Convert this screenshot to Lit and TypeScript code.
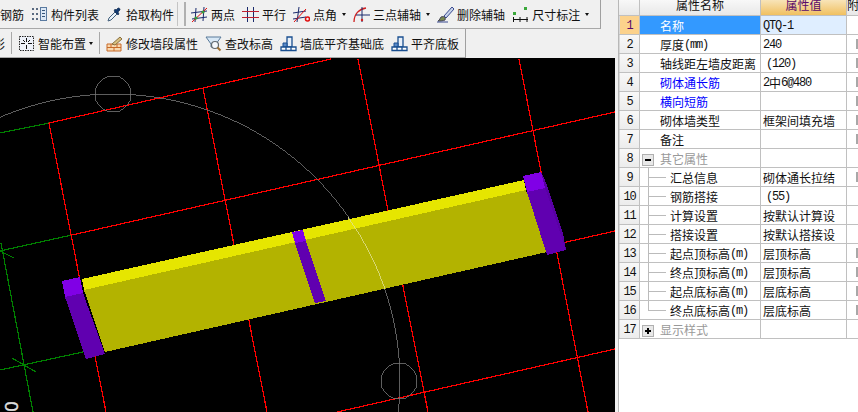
import { LitElement, css, html, svg } from "lit";
import { customElement } from "lit/decorators.js";

const NAVY = "#1a2a6c";
const RED = "#e01010";

// toolbar icons, all on a 17x17 box
const icons: Record<string, unknown> = {
  list: svg`<g fill="#5a6a80"><rect x="1" y="2" width="2" height="2"/><rect x="5" y="2" width="2" height="2"/><rect x="1" y="7" width="2" height="2"/><rect x="5" y="7" width="2" height="2"/><rect x="1" y="12" width="2" height="2"/><rect x="5" y="12" width="2" height="2"/></g>
    <rect x="9.5" y="1.5" width="6" height="13" fill="#dce8f6" stroke="#5a7aa0"/><path d="M11 4.5h3M11 7.5h3M11 10.5h3" stroke="#35557a"/>`,
  dropper: svg`<path d="M2 15l1-3 6-6 2 2-6 6z" fill="#e8f2fa" stroke="#44607c"/><path d="M8 5l4 4 1-1-1-2 2-2a1.6 1.6 0 0 0-2-2l-2 2-1-1z" fill="#123a70" stroke="#0c2448" stroke-width=".6"/>`,
  twoPoint: svg`<path d="M5 2l-1 14M13 1l-1 14M0 7l16-2M1 13l15-2" stroke="${NAVY}" fill="none"/><path d="M1 16L16 2" stroke="${RED}"/><circle cx="5" cy="12" r="1.6" fill="#3a9a3a"/><circle cx="12" cy="6" r="1.6" fill="#3a9a3a"/>`,
  parallel: svg`<path d="M5.500 1v15M11.500 1v15" stroke="${NAVY}"/><path d="M0 5.500h17M0 11.500h17" stroke="#c02030"/>`,
  corner: svg`<path d="M6 1L4 16M0 7l13-2M0 13l13-2" stroke="${NAVY}" fill="none"/><path d="M1 16L13 3" stroke="${RED}"/><circle cx="14.500" cy="13" r="2" fill="none" stroke="${RED}" stroke-width="1.500"/>`,
  arc: svg`<path d="M1 16C1 8 6 3 13 2" fill="none" stroke="#d02020" stroke-width="1.300"/><path d="M9 1v15M3 9h14" stroke="${NAVY}"/><circle cx="9" cy="14" r="1.200" fill="#d02020"/>`,
  erase: svg`<path d="M7 10L15 1l2 2-8 9z" fill="#c8d4ea" stroke="#3a4a90"/><path d="M4 11c3-1 5 0 4 3-2 1-5 1-7 1 2-1 2-3 3-4z" fill="#7a8a50" stroke="#445"/><path d="M0 16h11" stroke="#3a4a90"/>`,
  dimension: svg`<rect x="1" y="6" width="3" height="3" fill="#3aa83a"/><rect x="12" y="1" width="3" height="3" fill="#3aa83a"/><path d="M1.500 11v5M8 11v5M15 11v5M1 13.500h15" stroke="#111"/>`,
  smart: svg`<rect x="1.500" y="1.500" width="14" height="14" fill="#eef2fa" stroke="#222" stroke-dasharray="1.500 1"/><path d="M8.500 3v4M8.500 10v4M3 8.500h4M10 8.500h4M5 5l2 2M12 5l-2 2" stroke="#111"/>`,
  brick: svg`<path d="M1 9h14v7H1z" fill="#f8d8b0" stroke="#c86a28"/><path d="M1 12.500h14M5 9v3.500M11 9v3.500M8 12.500V16" stroke="#c86a28"/><path d="M6 9l8-7 2 2-7 6z" fill="#d8c080" stroke="#8a7040"/>`,
  lens: svg`<path d="M1 2h15l-5 7v3H6V9z" fill="#d8e8f6" stroke="#5a7a9a"/><circle cx="10" cy="10" r="3.500" fill="#f4f8fc" stroke="#606a70" stroke-width="1.200"/><path d="M12.500 12.500l3 3" stroke="#a07030" stroke-width="2"/>`,
  align: svg`<path d="M7 2h5v10H7z" fill="#e8f0fa" stroke="#1a4f90" stroke-width="1.300"/><path d="M3 8h4v4H3z" fill="#5a8ac8" stroke="#1a4f90"/><path d="M1 12h15v3.500H1zM6 12v3.500M11 12v3.500" fill="#fff" stroke="#1a4f90" stroke-width="1.300"/>`,
};

type Tool = { icon: string; label: string; menu?: boolean };

const topLeft: Tool[] = [
  { icon: "list", label: "构件列表" },
  { icon: "dropper", label: "拾取构件" },
];
const topRight: Tool[] = [
  { icon: "twoPoint", label: "两点" },
  { icon: "parallel", label: "平行" },
  { icon: "corner", label: "点角", menu: true },
  { icon: "arc", label: "三点辅轴", menu: true },
  { icon: "erase", label: "删除辅轴" },
  { icon: "dimension", label: "尺寸标注", menu: true },
];
const lowerLeft: Tool[] = [{ icon: "smart", label: "智能布置", menu: true }];
const lowerRight: Tool[] = [
  { icon: "brick", label: "修改墙段属性" },
  { icon: "lens", label: "查改标高" },
  { icon: "align", label: "墙底平齐基础底" },
  { icon: "align", label: "平齐底板" },
];

@customElement("tool-row")
class ToolRow extends LitElement {
  static styles = css`
    :host {
      display: flex;
      align-items: center;
      gap: 7px;
      height: 28px;
      background: #f0f0f0;
      border-bottom: 1px solid #a8a8a8;
      font: 12px "Noto Sans CJK SC", sans-serif;
      color: #111;
      white-space: nowrap;
      overflow: hidden;
      box-sizing: content-box;
    }
    :host([short]) {
      width: 465px;
      border-right: 1px solid #a0a0a0;
    }
    :host([wide]) {
      width: 600px;
      border-right: 1px solid #a0a0a0;
    }
  `;
  render() {
    return html`<slot></slot>`;
  }
}

@customElement("cad-view")
class CadView extends LitElement {
  static styles = css`
    :host {
      display: block;
      height: 354px;
      background: #000;
      overflow: hidden;
    }
    svg {
      display: block;
    }
    .red {
      stroke: #f00;
      stroke-width: 1.2;
      fill: none;
    }
    .green {
      stroke: #008000;
      stroke-width: 1.2;
      fill: none;
    }
    .grey {
      stroke: #757575;
      stroke-width: 0.8;
      fill: none;
    }
    .pale {
      stroke: #e0e090;
      stroke-width: 0.8;
      fill: none;
    }
    .axis {
      font: 18px "Liberation Sans", sans-serif;
      fill: #ddd;
      stroke: #ddd;
      stroke-width: 0.4;
    }
  `;
  render() {
    return html`<svg width="615" height="354" viewBox="0 58 615 354" shape-rendering="crispEdges">
      <path class="green" d="M0 133L49 123M0 251L72 235M0 370L83 352M1 243L33 412M0 251L14 258M12 358L36 372" />
      <path class="red" d="M49 123L331 59M72 235L615 112M83 352L615 231M337 412L615 349" />
      <path class="red" d="M49 123L106 412M203 88L267 412M358 59L428 412M519 59L588 412" />
      <circle class="grey" cx="113" cy="381" r="287" />
      <circle class="grey" cx="113" cy="94" r="18" />
      <circle class="grey" cx="399" cy="381" r="18" />
      <polygon points="82,279 524,180 526,190 84,290" fill="#e6e600" />
      <polygon points="84,290 526,190 547,252 105,352" fill="#b3b300" />
      <polygon points="295,243 306,241 326,301 315,303" fill="#6000b0" />
      <polygon points="292,232 303,230 306,241 295,243" fill="#8000e6" />
      <polygon points="65,297 83,293 105,354 86,359" fill="#6000b0" />
      <polygon points="62,281 80,277 83,293 65,297" fill="#8000e6" />
      <polygon points="527,192 545,188 566,250 547,255" fill="#6000b0" />
      <polygon points="541,172 545,180 563,233 566,250 545,188" fill="#5900a4" />
      <polygon points="523,176 541,172 545,188 527,192" fill="#8000e6" />
      <path class="pale" d="M348 217A287 287 0 0 1 385 289" />
      <text class="axis" shape-rendering="auto" transform="translate(18 411.500) rotate(-90)">0</text>
    </svg>`;
  }
}

type Row = {
  name: string;
  value?: string;
  kind?: "blue" | "group" | "child";
  open?: boolean;
  check?: boolean;
  last?: boolean;
};

const rows: Row[] = [
  { name: "名称", value: "QTQ-1" },
  { name: "厚度(mm)", value: "240", check: true },
  { name: "轴线距左墙皮距离", value: "(120)", check: true },
  { name: "砌体通长筋", value: "2中6@480", kind: "blue", check: true },
  { name: "横向短筋", kind: "blue", check: true },
  { name: "砌体墙类型", value: "框架间填充墙", check: true },
  { name: "备注", check: true },
  { name: "其它属性", kind: "group", open: true },
  { name: "汇总信息", value: "砌体通长拉结", kind: "child", check: true },
  { name: "钢筋搭接", value: "(55)", kind: "child" },
  { name: "计算设置", value: "按默认计算设", kind: "child" },
  { name: "搭接设置", value: "按默认搭接设", kind: "child" },
  { name: "起点顶标高(m)", value: "层顶标高", kind: "child", check: true },
  { name: "终点顶标高(m)", value: "层顶标高", kind: "child", check: true },
  { name: "起点底标高(m)", value: "层底标高", kind: "child", check: true },
  { name: "终点底标高(m)", value: "层底标高", kind: "child", check: true, last: true },
  { name: "显示样式", kind: "group" },
];

// ascii runs use the narrow latin face, like the original grid font
const mixed = (text = "") =>
  text.split(/([\x20-\x7e]+)/).map((part) =>
    /[\x20-\x7e]/.test(part) ? html`<span class="latin">${part}</span>` : part
  );

@customElement("prop-grid")
class PropGrid extends LitElement {
  static styles = css`
    :host {
      display: block;
      font: 12px "Noto Sans CJK SC", sans-serif;
      color: #111;
      white-space: nowrap;
    }
    .row {
      display: grid;
      grid-template-columns: 21px 121px 86px 11px;
      height: 19px;
      border-bottom: 1px solid #c0c0c0;
      box-sizing: border-box;
    }
    .row > div {
      display: flex;
      align-items: center;
      position: relative;
      border-right: 1px solid #c0c0c0;
      padding-top: 1px;
      overflow: hidden;
      box-sizing: border-box;
    }
    .head {
      height: 16px;
    }
    .head > div {
      justify-content: center;
      align-items: flex-end;
      padding-top: 0;
      padding-bottom: 2px;
      background: linear-gradient(#f8f8f8, #e8e8e8);
    }
    .head .sel {
      background: linear-gradient(#f8e4b8, #f0c060);
      color: #5a0a6a;
    }
    .head .rest {
      justify-content: flex-start;
      border-right: 0;
    }
    .num {
      justify-content: center;
      background: linear-gradient(#f8f8f8, #ececec);
      border-left: 1px solid #d8d8d8;
    }
    .num.on {
      background: #fcd28c;
      color: #5a0a6a;
    }
    .name {
      padding-left: 20px;
    }
    .name.on {
      background: #3399ff;
      color: #fff;
    }
    .name.blue {
      color: #0000ff;
    }
    .name.group {
      color: #999;
    }
    .name.child {
      padding-left: 30px;
    }
    .value {
      padding-left: 2px;
    }
    .value.on {
      background: #dfeeff;
    }
    .value.paren {
      padding-left: 5px;
    }
    .rest {
      border-right: 0 !important;
    }
    .rest.check::after {
      content: "";
      position: absolute;
      left: 9px;
      top: 4px;
      width: 2px;
      height: 10px;
      background: #a8a8a8;
    }
    .latin {
      font-family: "Liberation Mono", monospace;
      letter-spacing: -1.2px;
    }
    .fold {
      position: absolute;
      left: 2px;
      top: 5px;
      width: 12px;
      height: 12px;
      box-sizing: border-box;
      border: 1px solid #b0b0b0;
      background: #e8e8e8;
    }
    .fold::before,
    .fold.closed::after {
      content: "";
      position: absolute;
      left: 2px;
      top: 4px;
      width: 6px;
      height: 2px;
      background: #000;
    }
    .fold.closed::after {
      left: 4px;
      top: 2px;
      width: 2px;
      height: 6px;
    }
    .tree {
      position: absolute;
      left: 8px;
      top: 0;
      width: 17px;
      height: 100%;
      border-left: 1px solid #bbb;
    }
    .tree::after {
      content: "";
      position: absolute;
      left: 0;
      top: 9px;
      width: 17px;
      border-top: 1px solid #bbb;
    }
    .tree.last {
      height: 10px;
    }
  `;
  render() {
    return html`
      <div class="row head">
        <div></div>
        <div>属性名称</div>
        <div class="sel">属性值</div>
        <div class="rest">附加</div>
      </div>
      ${rows.map((row, i) => {
        const on = i === 0 ? "on" : "";
        return html`<div class="row">
          <div class="num ${on}"><span class="latin">${i + 1}</span></div>
          <div class="name ${on} ${row.kind ?? ""}">
            ${row.kind === "group" ? html`<span class="fold ${row.open ? "" : "closed"}"></span>` : ""}
            ${row.kind === "child" ? html`<span class="tree ${row.last ? "last" : ""}"></span>` : ""}
            ${mixed(row.name)}
          </div>
          <div class="value ${on} ${row.value?.startsWith("(") ? "paren" : ""}">${mixed(row.value)}</div>
          <div class="rest ${row.check ? "check" : ""}"></div>
        </div>`;
      })}
    `;
  }
}

@customElement("app-root")
class AppRoot extends LitElement {
  static styles = css`
    :host {
      display: grid;
      grid-template-columns: 615px 3px 1px 1fr;
      height: 412px;
      width: 858px;
      overflow: hidden;
      background: #fff;
      font: 12px "Noto Sans CJK SC", sans-serif;
    }
    .left {
      display: flex;
      flex-direction: column;
      background: #f0f0f0;
      min-width: 0;
    }
    .strip {
      background: #f0f0f0;
    }
    .rule {
      background: #b8b8b8;
    }
    .tool {
      display: flex;
      align-items: center;
      gap: 3px;
    }
    .tool svg {
      width: 17px;
      height: 17px;
      flex: none;
    }
    .arrow {
      width: 0;
      height: 0;
      border: 2.5px solid transparent;
      border-top: 3px solid #111;
      border-bottom: 0;
    }
    .top .arrow {
      margin-left: 2px;
    }
    .cut {
      margin-left: -7px;
    }
    .sep {
      width: 1px;
      height: 22px;
      margin: 0 -1px;
      background: #a8a8a8;
    }
    .grip {
      display: flex;
      gap: 6px;
      margin: 0 -2px 0 -4px;
    }
    .grip i {
      width: 1px;
      height: 24px;
      background: #c4c4c4;
    }
    .grip i + i {
      width: 2px;
      background: #b0b0b0;
    }
  `;

  private tool(t: Tool) {
    return html`<span class="tool">
      <svg viewBox="0 0 17 17">${icons[t.icon]}</svg>
      <span>${t.label}</span>
      ${t.menu ? html`<span class="arrow"></span>` : ""}
    </span>`;
  }

  render() {
    return html`
      <div class="left">
        <tool-row wide class="top">
          <span>钢筋</span>
          ${topLeft.map((t) => this.tool(t))}
          <span class="grip"><i></i><i></i></span>
          ${topRight.map((t) => this.tool(t))}
        </tool-row>
        <tool-row short>
          <span class="cut">影</span>
          <span class="sep"></span>
          ${lowerLeft.map((t) => this.tool(t))}
          <span class="sep"></span>
          ${lowerRight.map((t) => this.tool(t))}
        </tool-row>
        <cad-view></cad-view>
      </div>
      <div class="strip"></div>
      <div class="rule"></div>
      <prop-grid></prop-grid>
    `;
  }
}
